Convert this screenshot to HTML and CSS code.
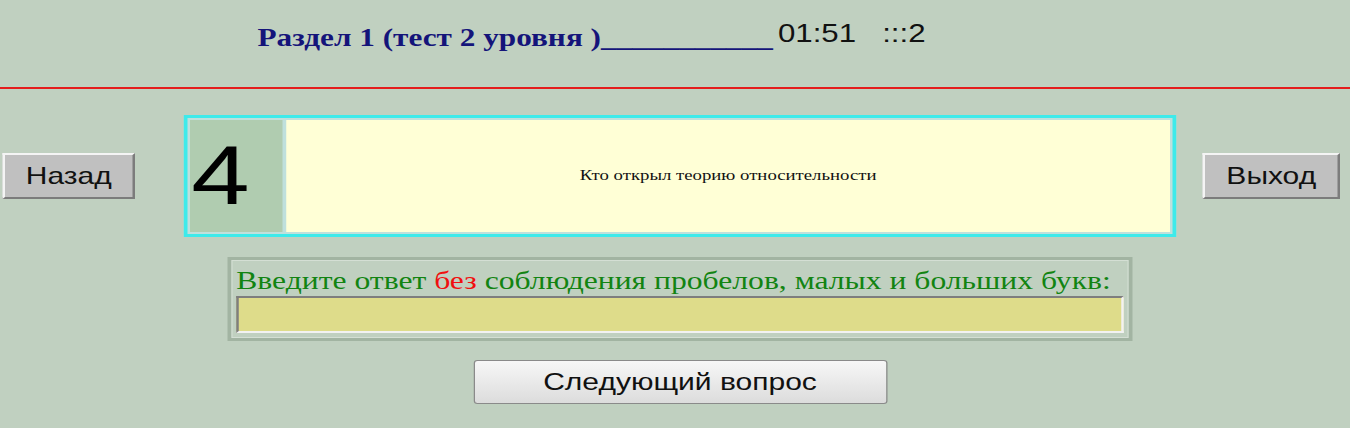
FILE: index.html
```html
<!DOCTYPE html>
<html lang="ru">
<head>
<meta charset="utf-8">
<title>Тест</title>
<link rel="stylesheet" href="styles.css">
</head>
<body>
<div class="stage">
  <header class="head">
    <span class="title">Раздел 1 (тест 2 уровня )___________</span>
    <span class="timer">01:51&nbsp;&nbsp;&nbsp;:::2</span>
  </header>
  <div class="rule"></div>
  <div class="qrow">
    <button class="navbtn back" type="button">Назад</button>
    <div class="qbox">
      <div class="qnum">4</div>
      <div class="qtext">Кто открыл теорию относительности</div>
    </div>
    <button class="navbtn exit" type="button">Выход</button>
  </div>
  <div class="content">
    <div class="answer">
      <div class="prompt">Введите ответ <span class="warn">без</span> соблюдения пробелов, малых и больших букв:</div>
      <input class="field" type="text">
    </div>
    <button class="next" type="button">Следующий вопрос</button>
  </div>
</div>
</body>
</html>
```

FILE: styles.css
```css
html, body {
  margin: 0;
  padding: 0;
  background: #c0d0c0;
  overflow: hidden;
}
.stage {
  width: 1080px;
  transform: scaleX(1.25);
  transform-origin: 0 0;
  font-family: "Liberation Sans", Arial, sans-serif;
}
.head {
  height: 87px;
  display: flex;
  align-items: flex-start;
  padding-left: 206px;
  box-sizing: border-box;
  padding-top: 18px;
}
.title {
  font-family: "Liberation Serif", "Times New Roman", serif;
  font-weight: bold;
  font-size: 25px;
  line-height: 30px;
  margin-top: 5px;
  color: #14147a;
}
.timer {
  font-size: 25px;
  line-height: 30px;
  color: #111;
  margin-left: 4px;
}
.rule {
  height: 2px;
  background: #e41c1c;
}
.qrow {
  display: flex;
  align-items: center;
  margin-top: 26px;
  padding-left: 2px;
}
.navbtn {
  height: 46px;
  background: #c0c0c0;
  border: 2px solid;
  border-color: #f4f4f4 #7c7c7c #7c7c7c #f4f4f4;
  font-family: "Liberation Sans", Arial, sans-serif;
  font-size: 24px;
  color: #111;
  padding: 0;
  box-sizing: border-box;
}
.back { width: 106px; }
.exit { width: 110px; margin-left: 21px; }
.qbox {
  margin-left: 39px;
  width: 794px;
  height: 122px;
  box-sizing: border-box;
  border: 3px solid #3eeaea;
  padding: 2px;
  background: #bfe0dc;
  display: flex;
}
.qnum {
  width: 74px;
  background: #b0ccb0;
  font-size: 84px;
  line-height: 110px;
  color: #000;
  padding-left: 1px;
  box-sizing: border-box;
}
.qtext {
  flex: 1;
  margin-left: 3px;
  background: #ffffd6;
  display: flex;
  align-items: center;
  justify-content: center;
  font-family: "Liberation Serif", "Times New Roman", serif;
  font-size: 15px;
  color: #111;
  padding-bottom: 2px;
}
.content {
  padding-left: 8px;
  display: flex;
  flex-direction: column;
  align-items: center;
}
.answer {
  margin-top: 20px;
  width: 724px;
  height: 84px;
  box-sizing: border-box;
  border: 3px solid #a2b4a2;
  box-shadow: inset 0 0 0 1px #d4dfd4;
  padding: 5px 4px 4px 4px;
}
.prompt {
  font-family: "Liberation Serif", "Times New Roman", serif;
  font-size: 25.3px;
  line-height: 30px;
  color: #128412;
  white-space: nowrap;
}
.warn { color: #f01010; }
.field {
  display: block;
  width: 100%;
  height: 37px;
  box-sizing: border-box;
  margin: 1px 0 0 0;
  border: 2px solid;
  border-color: #7e7e7e #f2f2f2 #f2f2f2 #7e7e7e;
  background: #dedc8a;
  padding: 0;
}
.next {
  margin-top: 19px;
  width: 331px;
  height: 44px;
  border: 1px solid #8a8a8a;
  border-radius: 3px;
  background: linear-gradient(#f7f7f7, #dcdcdc);
  font-family: "Liberation Sans", Arial, sans-serif;
  font-size: 24px;
  color: #111;
  padding: 0;
}
```
